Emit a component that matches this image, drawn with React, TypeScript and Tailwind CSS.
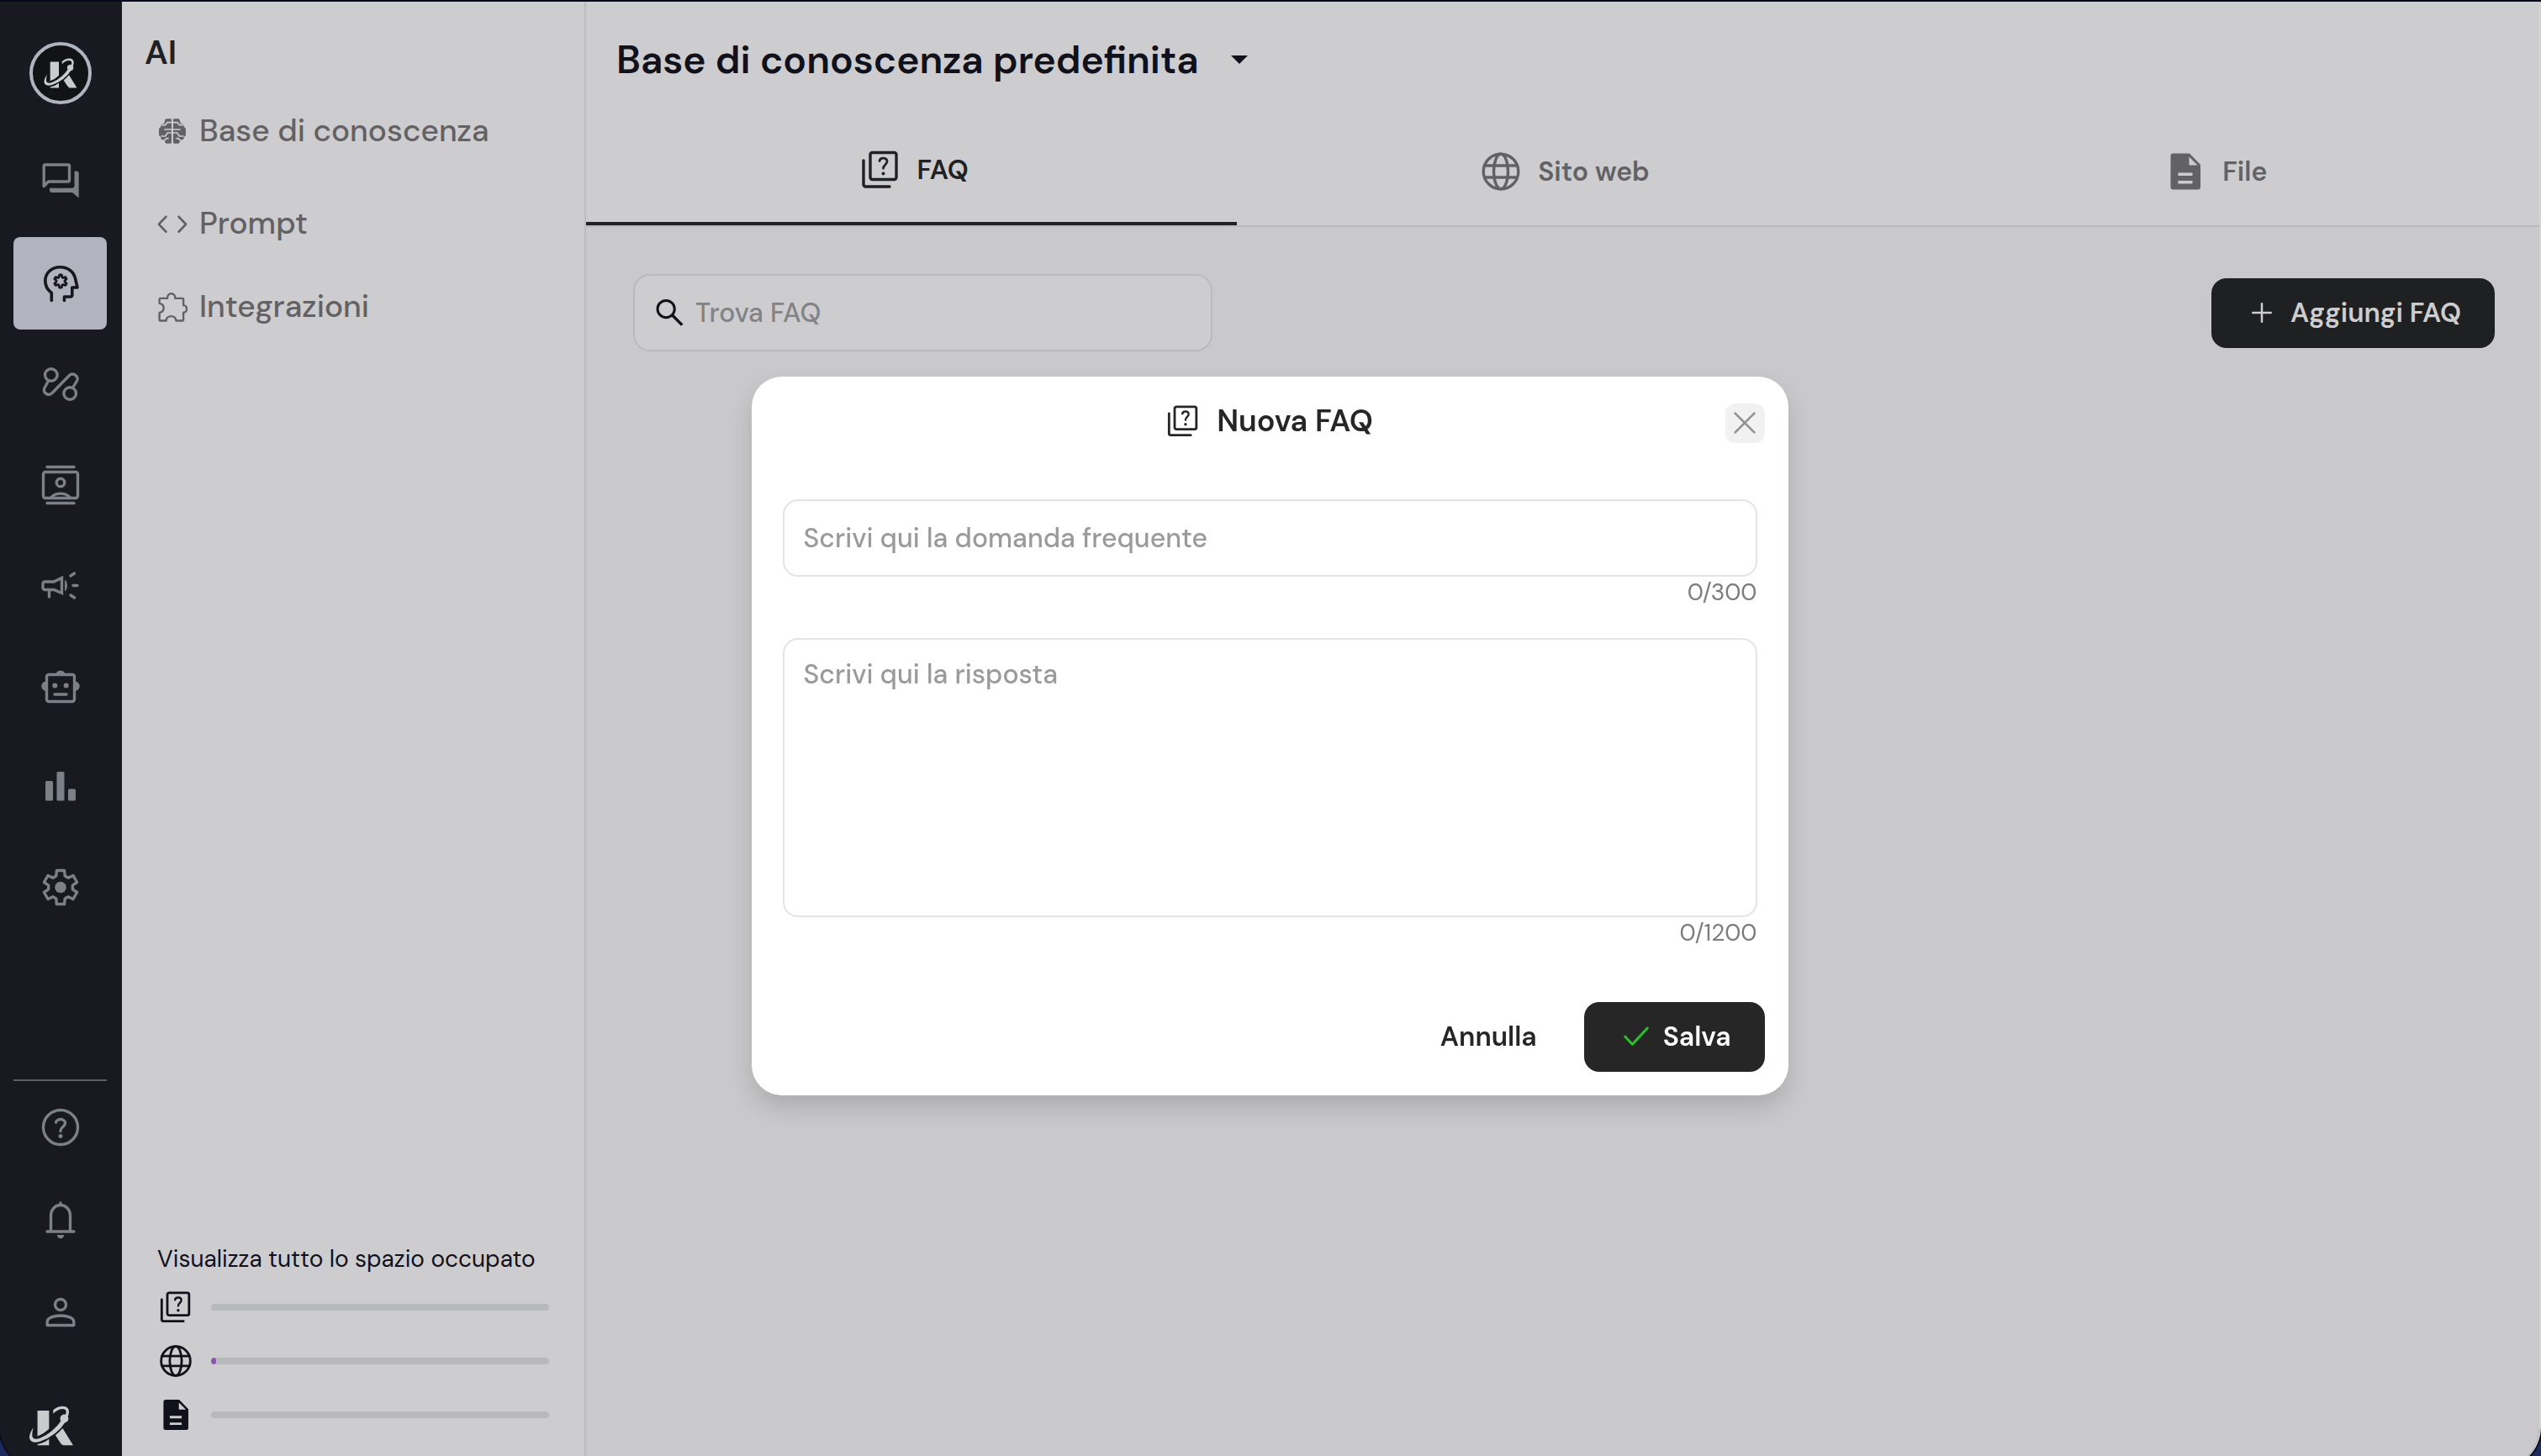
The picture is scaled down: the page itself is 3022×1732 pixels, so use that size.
import type { ReactNode, SVGProps } from "react";

type IconProps = SVGProps<SVGSVGElement>;

/* ---------- icons ---------- */

function Icon({ children, strokeWidth = 3.4, ...rest }: IconProps & { children: ReactNode }) {
  return (
    <svg
      viewBox="0 0 48 48"
      fill="none"
      stroke="currentColor"
      strokeWidth={strokeWidth}
      strokeLinecap="round"
      strokeLinejoin="round"
      aria-hidden="true"
      {...rest}
    >
      {children}
    </svg>
  );
}

function gearPath(cx: number, cy: number, outer: number, inner: number, outerDeg: number, innerDeg: number) {
  const points: string[] = [];
  const at = (deg: number, r: number) => {
    const a = (deg * Math.PI) / 180;
    points.push(`${(cx + r * Math.cos(a)).toFixed(2)} ${(cy + r * Math.sin(a)).toFixed(2)}`);
  };
  for (let k = 0; k < 6; k++) {
    const mid = k * 60 - 90;
    at(mid - innerDeg, inner);
    at(mid - outerDeg, outer);
    at(mid + outerDeg, outer);
    at(mid + innerDeg, inner);
  }
  return `M${points.join("L")}Z`;
}

const ChatIcon = (p: IconProps) => (
  <Icon {...p}>
    <path d="M4.2 4.5a1.5 1.5 0 0 1 1.5-1.5H33a1.5 1.5 0 0 1 1.5 1.5v17A1.5 1.5 0 0 1 33 23H9.5l-5.3 5.5z" />
    <path
      d="M40.5 10.5h2.4a2.8 2.8 0 0 1 2.8 2.8v29.2L38 36H14a3 3 0 0 1-3-3v-2.300h26.500a3 3 0 0 0 3-3z"
      fill="currentColor"
      stroke="none"
    />
  </Icon>
);

const HeadIcon = (p: IconProps) => (
  <Icon {...p} strokeWidth={3.6}>
    <path d="M13.300 44.500V35.500C8.200 31.500 5.600 26.600 5.800 20.500 6.200 11 13.800 4.800 23.500 4.800c9.600 0 16.600 5.800 18.200 14.200l2.300 10h-6.200v9.300a1.700 1.700 0 0 1-1.700 1.700H28.500v4.500" />
    <path d={gearPath(24, 21.500, 7.600, 5, 9, 24)} strokeWidth={2.800} />
  </Icon>
);

const FlowIcon = (p: IconProps) => (
  <Icon {...p}>
    <circle cx="12.800" cy="13" r="7.300" />
    <circle cx="35.200" cy="35" r="7.300" />
    <path d="M9.500 20 5 28.500C2 34 9.500 39 14 34.500L34 14c4.500-4.500 12.500.5 9.500 6l-4.800 8" />
  </Icon>
);

const ContactsIcon = (p: IconProps) => (
  <Icon {...p}>
    <path d="M8 2.500h32M8 45.500h32" />
    <rect x="3.500" y="8.500" width="41" height="31" rx="2.500" />
    <circle cx="24" cy="21" r="4.800" />
    <path d="M12.500 39c6-6.500 17-6.500 23 0" />
  </Icon>
);

const MegaphoneIcon = (p: IconProps) => (
  <Icon {...p}>
    <path d="M5.500 19h10.500l9.500-4.500v18L16 28.500H5.500a2.500 2.500 0 0 1-2.500-2.500v-4.500A2.500 2.500 0 0 1 5.500 19z" strokeLinejoin="miter" />
    <path d="M10.500 29v8" />
    <path d="M29 16.500c4 3 4 11 0 14z" fill="currentColor" stroke="none" />
    <path d="M36 12l4.500-3M39 23.500h5M36 35l4.500 3" />
  </Icon>
);

const BotIcon = (p: IconProps) => (
  <Icon {...p}>
    <rect x="7.500" y="9.500" width="33" height="32" rx="2.500" />
    <path d="M18.500 9a5.700 5.700 0 0 1 11 0zM7 17.500a5.700 5.700 0 0 0 0 11.500zM41 17.500a5.700 5.700 0 0 1 0 11.500z" fill="currentColor" stroke="none" />
    <circle cx="17.300" cy="22.500" r="3" fill="currentColor" stroke="none" />
    <circle cx="30.700" cy="22.500" r="3" fill="currentColor" stroke="none" />
    <path d="M17 33h14" />
  </Icon>
);

const BarsIcon = (p: IconProps) => (
  <Icon {...p}>
    <g fill="currentColor" stroke="none">
      <rect x="6" y="16" width="9" height="23.500" rx="1.500" />
      <rect x="19.500" y="5" width="9" height="34.500" rx="1.500" />
      <rect x="33" y="25.500" width="9" height="14" rx="1.500" />
    </g>
  </Icon>
);

const GearIcon = (p: IconProps) => (
  <Icon {...p}>
    <path d={gearPath(24, 22.500, 20.500, 14.500, 13, 21)} />
    <circle cx="24" cy="22.500" r="6.800" fill="currentColor" stroke="none" />
  </Icon>
);

const HelpIcon = (p: IconProps) => (
  <Icon {...p}>
    <circle cx="24" cy="24" r="20.500" />
    <path d="M18.500 18.200c1-5 11-5 11 .8 0 4.200-5.500 4.500-5.500 9.500" />
    <circle cx="24" cy="34.500" r="2.500" fill="currentColor" stroke="none" />
  </Icon>
);

const BellIcon = (p: IconProps) => (
  <Icon {...p}>
    <path d="M8 38h32M12.500 37.500V19a11.500 12.500 0 0 1 23 0v18.500M24 4v2" />
    <path d="M19.800 42h8.400a4.200 4.200 0 0 1-8.400 0z" fill="currentColor" stroke="none" />
  </Icon>
);

const PersonIcon = (p: IconProps) => (
  <Icon {...p}>
    <circle cx="24" cy="15" r="6.500" />
    <path d="M8.200 35.500c0-10 31.600-10 31.600 0v4H8.200z" />
  </Icon>
);

const FaqIcon = (p: IconProps) => (
  <Icon {...p}>
    <rect x="12" y="3.500" width="31" height="32" rx="2.500" />
    <path d="M4 13v28.500a2.500 2.500 0 0 0 2.500 2.500H35" />
    <path d="M23 13.500c.6-4.500 9-4.500 9 .6 0 3.800-4.500 4-4.500 8.200" strokeWidth={2.800} />
    <circle cx="27.500" cy="28.500" r="2" fill="currentColor" stroke="none" />
  </Icon>
);

const GlobeIcon = (p: IconProps) => (
  <Icon {...p}>
    <circle cx="24" cy="24" r="20.800" />
    <ellipse cx="24" cy="24" rx="8.500" ry="20.800" />
    <path d="M4.500 17h39M4.500 31h39" />
  </Icon>
);

const FileIcon = (p: IconProps) => (
  <Icon {...p}>
    <path
      fillRule="evenodd"
      d="M9.500 2.500h19.500L42 16v26.500a3 3 0 0 1-3 3H9.500a3 3 0 0 1-3-3v-37a3 3 0 0 1 3-3zM28.500 6.500v10h10zM15.500 25.500v3.500h17v-3.500zM15.500 35v3.500h17V35z"
      fill="currentColor"
      stroke="none"
    />
  </Icon>
);

const BrainIcon = (p: IconProps) => (
  <svg viewBox="24 32 102 96" fill="currentColor" aria-hidden="true" {...p}>
    <path d="M54 36h14q4 0 4 4v80q0 4-4 4H54q-3 0-5-4l-4-9h-6q-3 0-4-3l-2-8q-6-2-6-8V74q0-6 6-8l2-8q1-4 4-4h6l4-14q2-4 5-4z" />
    <path d="M96 36H82q-4 0-4 4v80q0 4 4 4h14q3 0 5-4l4-9h6q3 0 4-3l2-8q6-2 6-8V74q0-6-6-8l-2-8q-1-4-4-4h-6l-4-14q-2-4-5-4z" />
    <path
      d="M36 58h14l7-9h15M46 74h26M34 98h16l8-12h14M62 106h-8l-8 8M114 58h-14l-7-9H78M104 74H78M116 98h-16l-8-12H78M88 106h8l8 8"
      fill="none"
      stroke="#cdcdcf"
      strokeWidth="5"
    />
  </svg>
);

const CodeIcon = (p: IconProps) => (
  <Icon {...p} strokeWidth={3.4}>
    <path d="M14 13 2.500 25l11.500 12M34 13l11.500 12-11.500 12" />
  </Icon>
);

const PuzzleIcon = (p: IconProps) => (
  <Icon {...p} strokeWidth={3.2}>
    <path d="M5 10.500h11c0-10 12.500-10 12.500 0H40a1.500 1.500 0 0 1 1.500 1.500v9.500c7 0 7 11.500 0 11.500v11.500a1.500 1.500 0 0 1-1.500 1.500H30c-1-9.500-15-9.500-16 0H5A1.500 1.500 0 0 1 3.500 44.500V33.500c9-2 9-13.500 0-15V12A1.500 1.500 0 0 1 5 10.500z" />
  </Icon>
);

const SearchIcon = (p: IconProps) => (
  <Icon {...p} strokeWidth={4}>
    <circle cx="17.500" cy="18" r="13.500" />
    <path d="M27.500 28 43 43.500" strokeWidth={4.600} strokeLinecap="butt" />
  </Icon>
);

const PlusIcon = (p: IconProps) => (
  <Icon {...p} strokeWidth={5}>
    <path d="M24 2.500v43M2.500 24h43" />
  </Icon>
);

const CloseIcon = (p: IconProps) => (
  <Icon {...p} strokeWidth={5}>
    <path d="M3 3l42 42M45 3 3 45" />
  </Icon>
);

const CheckIcon = (p: IconProps) => (
  <Icon {...p} strokeWidth={4.500}>
    <path d="M4 24l13 14L44 9" />
  </Icon>
);

const BrandMark = (p: IconProps) => (
  <svg viewBox="104 96 162 146" fill="currentColor" aria-hidden="true" {...p}>
    <path d="M135 114h42v66q-18 18-42 27z" />
    <path d="M135 236q24-4 42-19v23h-42z" />
    <path d="M200 203q14-11 26-25l38 62h-36q-7-3-12-12z" />
    <circle cx="232" cy="143" r="15" />
    <path d="M192 126v-14q14-13 33-14 24 0 24 22-1 12-8 22l-9-5q7-9 7-18-1-11-13-11-20 1-34 18z" />
    <path d="M120 176q-18 26-13 41 8 18 37 9 60-20 94-73l-12-9q-36 52-82 70-22 7-27-4-3-12 3-34z" />
  </svg>
);

/* ---------- rail ---------- */

const railItems = [
  { label: "Chat", icon: ChatIcon },
  { label: "AI", icon: HeadIcon, active: true },
  { label: "Flussi", icon: FlowIcon },
  { label: "Contatti", icon: ContactsIcon },
  { label: "Campagne", icon: MegaphoneIcon },
  { label: "Bot", icon: BotIcon },
  { label: "Statistiche", icon: BarsIcon },
  { label: "Impostazioni", icon: GearIcon },
];

const railFooter = [
  { label: "Aiuto", icon: HelpIcon },
  { label: "Notifiche", icon: BellIcon },
  { label: "Profilo", icon: PersonIcon },
];

function Rail() {
  return (
    <nav aria-label="Principale" className="flex w-[145px] shrink-0 flex-col bg-[#191922] pt-12 pr-[18px] pb-7 pl-4 text-[#7b8187]">
      <a
        href="#home"
        aria-label="Home"
        className="flex size-[74px] shrink-0 items-center justify-center self-center rounded-full border-4 border-[#b1b4be] bg-[#121315] text-[#c9cbcd]"
      >
        <BrandMark className="h-9 w-10" />
      </a>
      <ul className="mt-[38px] flex flex-col gap-2.5">
        {railItems.map(({ label, icon: Glyph, active }) => (
          <li key={label}>
            <a
              href={`#${label.toLowerCase()}`}
              aria-label={label}
              aria-current={active ? "page" : undefined}
              className={
                active
                  ? "flex h-[110px] items-center justify-center rounded-lg bg-[#b1b4be] text-[#17171d]"
                  : "flex h-[110px] items-center justify-center rounded-lg"
              }
            >
              <Glyph className="size-12" />
            </a>
          </li>
        ))}
      </ul>
      <ul className="mt-auto flex flex-col border-t-2 border-[#5b5f66]">
        {railFooter.map(({ label, icon: Glyph }) => (
          <li key={label}>
            <button type="button" aria-label={label} className="flex h-[110px] w-full items-center justify-center">
              <Glyph className="size-12" />
            </button>
          </li>
        ))}
      </ul>
      <BrandMark className="mt-14 ml-[18px] h-12 w-[54px] shrink-0 text-[#c9cbcd]" />
    </nav>
  );
}

/* ---------- section sidebar ---------- */

const storage = [
  { label: "FAQ", icon: FaqIcon, percent: 0 },
  { label: "Sito web", icon: GlobeIcon, percent: 1.5 },
  { label: "File", icon: FileIcon, percent: 0 },
];

function Sidebar() {
  return (
    <aside className="flex w-[552px] shrink-0 flex-col border-r-2 border-[#bbbcbe] bg-[#cdcdcf] pt-7 pb-[33px]">
      <h2 className="h-16 px-[27px] text-[40px] leading-[64px] font-semibold text-[#202124]">AI</h2>
      <ul className="text-[37px] font-medium text-[#626264]">
        <li>
          <a href="#base" className="flex h-[123px] items-center gap-3.5 pl-[42px]">
            <span className="flex w-9 justify-center">
              <BrainIcon className="h-8 w-[34px]" />
            </span>
            Base di conoscenza
          </a>
        </li>
        <li>
          <a href="#prompt" className="flex h-[98px] items-center gap-3.5 pl-[42px]">
            <CodeIcon className="size-9" />
            Prompt
          </a>
        </li>
        <li>
          <a href="#integrazioni" className="flex h-[100px] items-center gap-3.5 pl-[42px]">
            <PuzzleIcon className="size-9" />
            Integrazioni
          </a>
        </li>
      </ul>
      <section className="mt-auto px-[42px] text-[#11111c]">
        <h3 className="text-[28px] leading-[50px]">Visualizza tutto lo spazio occupato</h3>
        <ul>
          {storage.map(({ label, icon: Glyph, percent }) => (
            <li key={label} className="flex h-16 items-center gap-[22px]" aria-label={label}>
              <Glyph className="ml-0.5 size-10 shrink-0" />
              <div className="h-2 grow overflow-hidden rounded-full bg-[#b7b9bb]">
                <div className="h-full rounded-full bg-[#8e55b0]" style={{ width: `${percent}%` }} />
              </div>
            </li>
          ))}
        </ul>
      </section>
    </aside>
  );
}

/* ---------- main area ---------- */

const tabs = [
  { label: "FAQ", icon: FaqIcon, active: true },
  { label: "Sito web", icon: GlobeIcon, active: false },
  { label: "File", icon: FileIcon, active: false },
];

function Main() {
  return (
    <main className="flex min-w-0 grow flex-col bg-[#c9c9cb]">
      <header className="bg-[#cdcdcf]">
        <h1 className="flex h-[138px] items-center px-9">
          <button type="button" aria-haspopup="listbox" className="flex items-center gap-[38px] text-[46px] font-semibold text-[#11111c]">
            Base di conoscenza predefinita
            <svg viewBox="0 0 20 10" className="w-5 fill-current" aria-hidden="true">
              <path d="M0 0h20L10 10z" />
            </svg>
          </button>
        </h1>
        <div role="tablist" className="grid grid-cols-3 border-b-2 border-[#b9babc] text-[32px] font-semibold">
          {tabs.map(({ label, icon: Glyph, active }) => (
            <button
              key={label}
              type="button"
              role="tab"
              aria-selected={active}
              className={
                active
                  ? "flex h-32 items-center justify-center gap-5 border-b-4 border-[#202124] pl-1.5 text-[#202124]"
                  : "flex h-32 items-center justify-center gap-5 pl-1.5 text-[#626264]"
              }
            >
              <Glyph className="size-12" />
              {label}
            </button>
          ))}
        </div>
      </header>
      <div className="flex items-center justify-between pt-14 pr-[53px] pl-14">
        <label className="flex h-[92px] w-[689px] items-center gap-3 rounded-[20px] border-2 border-[#b9babc] bg-[#cdcdcf] px-6">
          <SearchIcon className="size-9 shrink-0 text-[#11111c]" />
          <input
            type="search"
            aria-label="Trova FAQ"
            placeholder="Trova FAQ"
            className="min-w-0 grow bg-transparent text-[32px] font-medium outline-none placeholder:text-[#838385]"
          />
        </label>
        <button
          type="button"
          className="flex h-[83px] items-center gap-[22px] rounded-[18px] bg-[#1f2022] pr-10 pl-12 text-[32px] font-semibold text-[#cdcdcf]"
        >
          <PlusIcon className="size-6" />
          Aggiungi FAQ
        </button>
      </div>
    </main>
  );
}

/* ---------- dialog ---------- */

function NewFaqDialog() {
  return (
    <div className="fixed inset-0 flex items-center justify-center pt-[18px] pr-0.5">
      <form
        role="dialog"
        aria-modal="true"
        aria-labelledby="faq-title"
        className="w-[1233px] rounded-[36px] bg-white pb-7 shadow-[0_14px_28px_rgba(0,0,0,0.14)]"
      >
        <div className="grid grid-cols-[1fr_auto_1fr] items-center px-7 pt-8">
          <h2 id="faq-title" className="col-start-2 flex items-center gap-5 pb-1 text-4xl font-semibold text-[#262626]">
            <FaqIcon className="size-10" />
            Nuova FAQ
          </h2>
          <button
            type="button"
            aria-label="Chiudi"
            className="flex size-[47px] items-center justify-center justify-self-end rounded-xl bg-[#f1f1f1] text-[#929292]"
          >
            <CloseIcon className="size-[26px]" />
          </button>
        </div>
        <div className="px-[37px] pt-[67px]">
          <input
            type="text"
            aria-label="Domanda frequente"
            placeholder="Scrivi qui la domanda frequente"
            className="block h-[92px] w-full rounded-[18px] border-2 border-[#e4e4e4] px-[23px] text-[32px] font-medium outline-none placeholder:text-[#9a9a9a]"
          />
          <p className="text-right text-[28px] leading-[38px] text-[#7d7d7d]">0/300</p>
          <textarea
            aria-label="Risposta"
            placeholder="Scrivi qui la risposta"
            className="mt-[35px] block h-[332px] w-full resize-none rounded-[18px] border-2 border-[#e4e4e4] px-[23px] py-[19px] text-[32px] leading-[44px] font-medium outline-none placeholder:text-[#9a9a9a]"
          />
          <p className="text-right text-[28px] leading-[38px] text-[#7d7d7d]">0/1200</p>
        </div>
        <div className="mt-[63px] flex justify-end gap-7 px-7 text-[32px] font-semibold">
          <button type="button" className="px-7 text-[#262626]">
            Annulla
          </button>
          <button type="submit" className="flex h-[83px] items-center gap-4 rounded-[18px] bg-[#262626] pr-10 pl-[46px] text-white">
            <CheckIcon className="size-8 text-[#28c328]" />
            Salva
          </button>
        </div>
      </form>
    </div>
  );
}

export default function App() {
  return (
    <div className="h-screen overflow-hidden border-t-2 border-[#05071a] bg-[#1d2a60] font-['DM_Sans',Inter,sans-serif] [font-optical-sizing:none]">
      <div className="flex h-[calc(100%+16px)] overflow-hidden rounded-b-[51px] border-r-2 border-[#d3d3d4] shadow-[0_0_0_2px_#0b0b14]">
        <Rail />
        <Sidebar />
        <Main />
      </div>
      <NewFaqDialog />
    </div>
  );
}
